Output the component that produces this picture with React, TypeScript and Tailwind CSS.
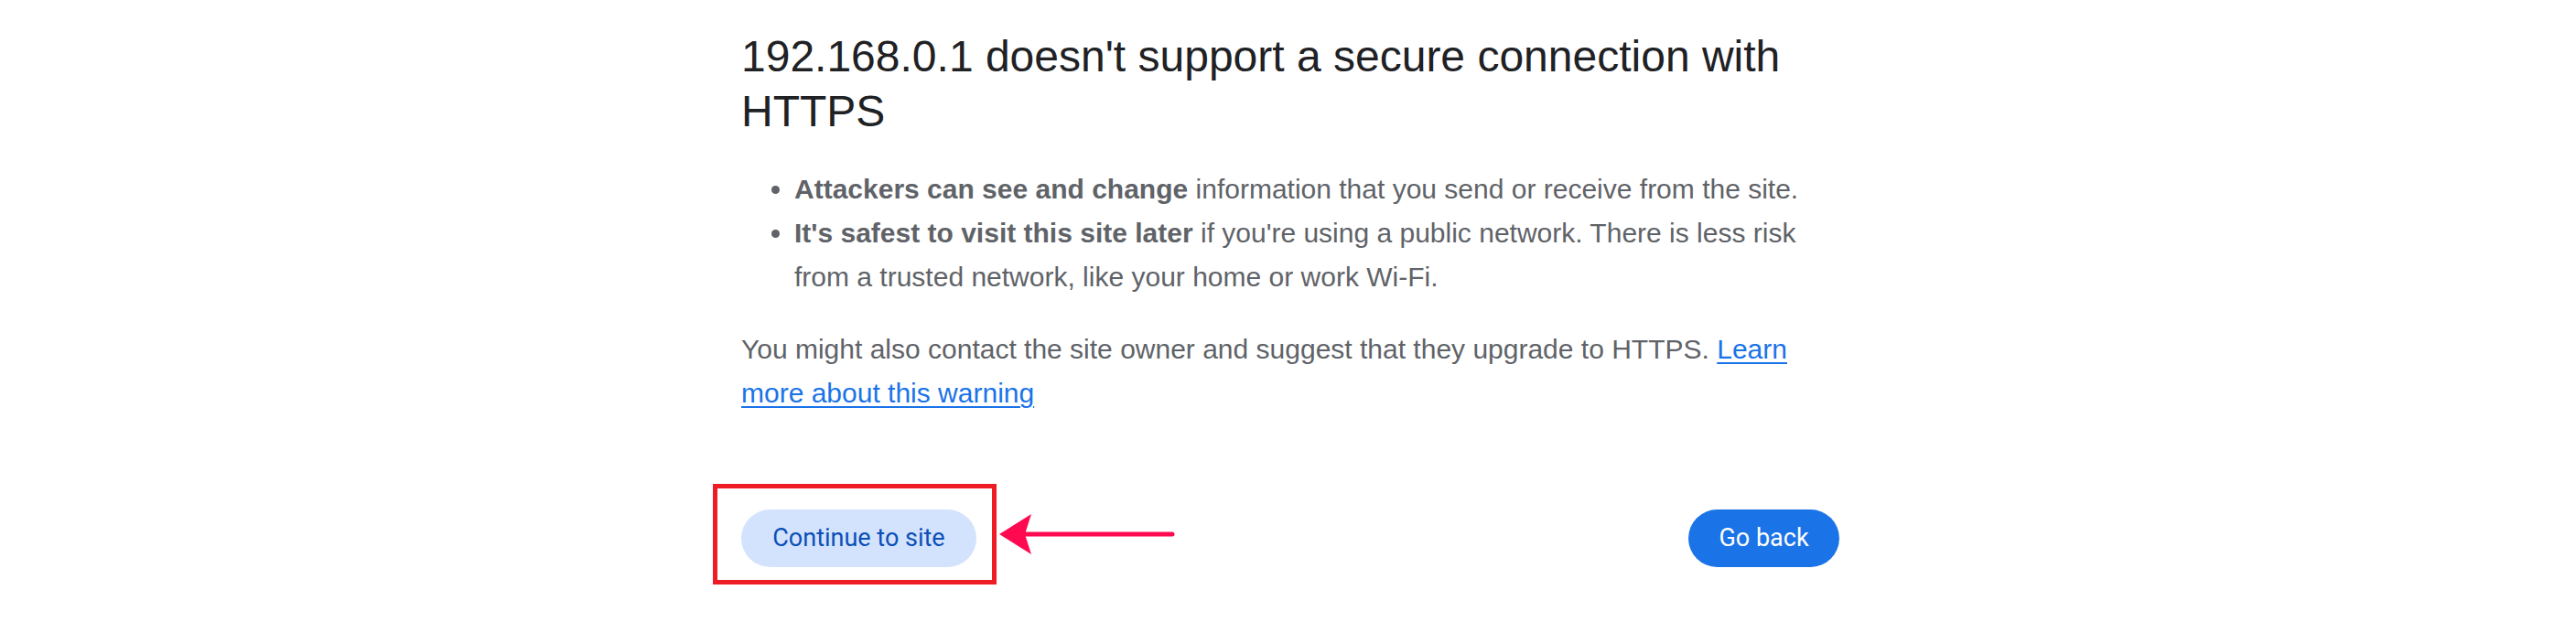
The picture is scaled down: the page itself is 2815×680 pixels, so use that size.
export default function App() {
  return (
    <div className="min-h-[680px] bg-white font-['Liberation_Sans',Arial,sans-serif]">
      <div className="ml-[810px] w-[1200px] pt-[32px]">
        {/* Titulo */}
        <h1 className="text-[48px] font-normal leading-[60px] text-[#202124]">
          192.168.0.1 doesn't support a secure connection with HTTPS
        </h1>

        {/* Detalles */}
        <ul className="mt-[31px] list-disc pl-[58px] text-[30px] leading-[48px] text-[#5f6368] marker:text-[#5f6368]">
          <li>
            <b className="font-bold">Attackers can see and change</b> information that you send or receive from
            the site.
          </li>
          <li>
            <b className="font-bold">It's safest to visit this site later</b> if you're using a public network.
            There is less risk from a trusted network, like your home or work Wi-Fi.
          </li>
        </ul>

        <p className="mt-[31px] text-[30px] leading-[48px] text-[#5f6368]">
          You might also contact the site owner and suggest that they upgrade to HTTPS.{" "}
          <a href="#" className="text-[#1a73e8] underline decoration-[2px] underline-offset-[4px]">
            Learn more about this warning
          </a>
        </p>

        {/* Botones */}
        <div className="relative mt-[103px] flex items-center justify-between font-['Roboto',sans-serif]">
          <button className="h-[63px] w-[257px] rounded-full bg-[#d3e3fd] text-center text-[27px] font-normal text-[#0b4fb8]">
            Continue to site
          </button>
          <button className="h-[63px] w-[165px] rounded-full bg-[#1b73e8] text-center text-[27px] font-normal text-white">
            Go back
          </button>

          {/* Anotación */}
          <div className="pointer-events-none absolute left-[-31px] top-[-28px] h-[110px] w-[310px] border-[5px] border-[#ee1c25]" />
          <svg
            className="pointer-events-none absolute left-[260px] top-[2px]"
            width="220"
            height="50"
            viewBox="0 0 220 50"
          >
            <path d="M40 25 H211" stroke="#ff0a50" strokeWidth={5} strokeLinecap="round" fill="none" />
            <path d="M22 25 L57 3 L50 25 L57 47 Z" fill="#ff0a50" />
          </svg>
        </div>
      </div>
    </div>
  );
}
